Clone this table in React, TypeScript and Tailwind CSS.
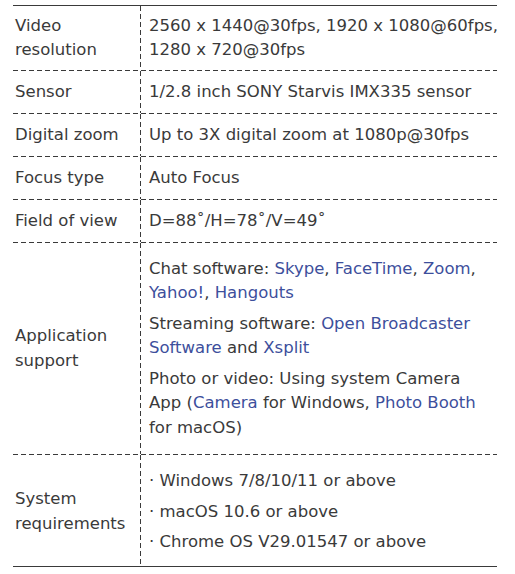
const ink = 'text-[#3a3a3a]';

function HDash() {
  return (
    <div className="h-px w-full bg-[repeating-linear-gradient(90deg,#3a3a3a_0_5px,transparent_5px_8px)]" />
  );
}

function Link({ children }: { children: React.ReactNode }) {
  return <span className="text-[#3d4f9c]">{children}</span>;
}

function Row({
  label,
  children,
  pad = 'py-[8.75px]',
}: {
  label: React.ReactNode;
  children: React.ReactNode;
  pad?: string;
}) {
  return (
    <div className="flex">
      <div className={`w-[127px] shrink-0 flex items-center pl-[2px] ${pad}`}>
        <div>{label}</div>
      </div>
      <div className="w-px shrink-0 bg-[repeating-linear-gradient(180deg,#3a3a3a_0_5px,transparent_5px_8px)]" />
      <div className={`flex-1 pl-[8px] ${pad}`}>{children}</div>
    </div>
  );
}

function Line({ children }: { children: React.ReactNode }) {
  return <div className="whitespace-nowrap">{children}</div>;
}

export default function App() {
  return (
    <div className="min-h-[574px] w-[515px] bg-white pt-[5px] pl-[13px]">
      <div
        className={`w-[484px] ${ink} text-[16.5px] leading-[24.5px]`}
        style={{ fontFamily: '"DejaVu Sans", "Liberation Sans", sans-serif' }}
      >
        <div className="h-px w-full bg-[#3a3a3a]" />
        <Row label={<><div>Video</div><div>resolution</div></>} pad="py-[7.5px]">
          <Line>2560 x 1440@30fps, 1920 x 1080@60fps,</Line>
          <Line>1280 x 720@30fps</Line>
        </Row>
        <HDash />
        <Row label="Sensor">
          <Line>1/2.8 inch SONY Starvis IMX335 sensor</Line>
        </Row>
        <HDash />
        <Row label="Digital zoom">
          <Line>Up to 3X digital zoom at 1080p@30fps</Line>
        </Row>
        <HDash />
        <Row label="Focus type">
          <Line>Auto Focus</Line>
        </Row>
        <HDash />
        <Row label="Field of view">
          <Line>D=88˚/H=78˚/V=49˚</Line>
        </Row>
        <HDash />
        <Row label={<><div>Application</div><div>support</div></>} pad="py-[13.75px]">
          <div className="flex flex-col gap-[6px]">
            <div>
              <Line>
                Chat software: <Link>Skype</Link>, <Link>FaceTime</Link>, <Link>Zoom</Link>,
              </Line>
              <Line>
                <Link>Yahoo!</Link>, <Link>Hangouts</Link>
              </Line>
            </div>
            <div>
              <Line>
                Streaming software: <Link>Open Broadcaster</Link>
              </Line>
              <Line>
                <Link>Software</Link> and <Link>Xsplit</Link>
              </Line>
            </div>
            <div>
              <Line>Photo or video: Using system Camera</Line>
              <Line>
                App (<Link>Camera</Link> for Windows, <Link>Photo Booth</Link>
              </Line>
              <Line>for macOS)</Line>
            </div>
          </div>
        </Row>
        <HDash />
        <Row label={<><div>System</div><div>requirements</div></>} pad="pt-[14px] pb-[11.5px]">
          <div className="flex flex-col gap-[6px]">
            <Line>· Windows 7/8/10/11 or above</Line>
            <Line>· macOS 10.6 or above</Line>
            <Line>· Chrome OS V29.01547 or above</Line>
          </div>
        </Row>
        <div className="h-px w-full bg-[#3a3a3a]" />
      </div>
    </div>
  );
}
